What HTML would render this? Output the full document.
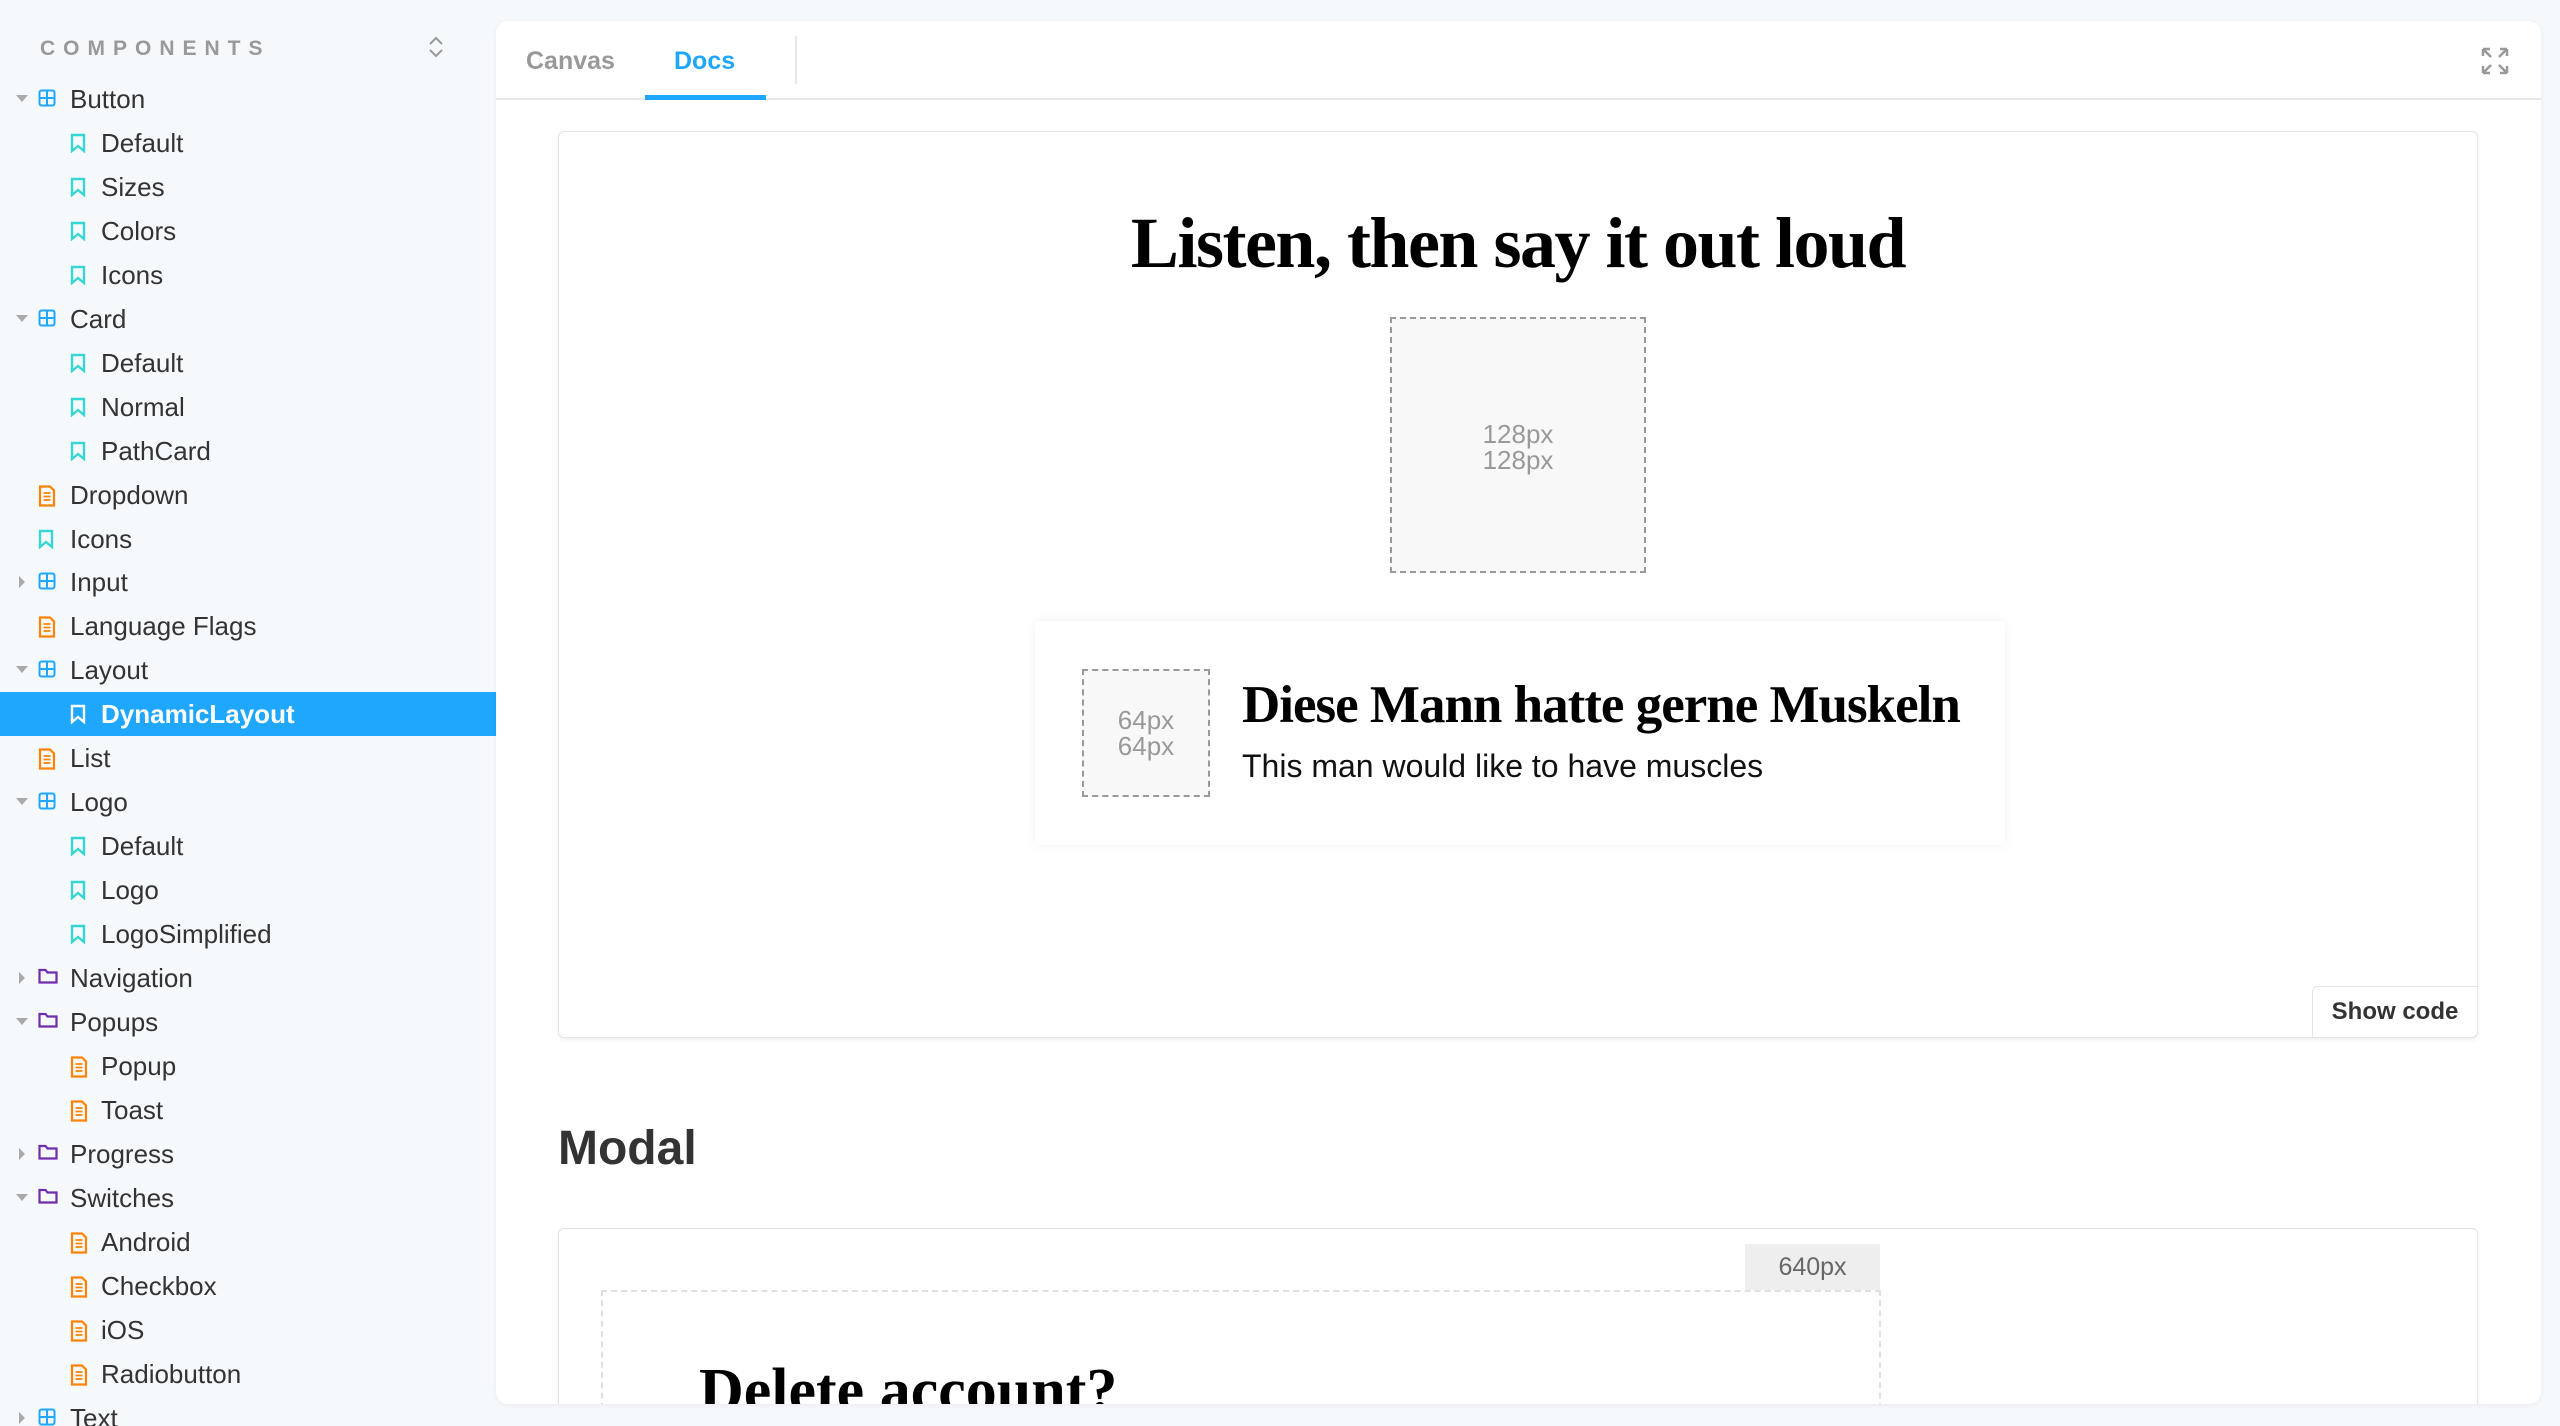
<!DOCTYPE html>
<html style="overflow:hidden;height:1426px"><head><meta charset="utf-8"><style>
*{margin:0;padding:0;box-sizing:border-box}
body{width:2560px;height:1426px;background:#f6f9fc;font-family:"Liberation Sans",sans-serif;position:relative;overflow:hidden;color:#333}
.sb{position:absolute;left:0;top:0;width:496px;height:1426px;overflow:hidden}
.hd{position:absolute;left:40px;top:37px;font-size:21px;font-weight:bold;letter-spacing:8px;color:#999}
.row{position:absolute;left:0;width:496px;height:44px;font-size:26px;line-height:44px;color:#333;overflow:hidden}
.row .t{position:absolute;top:0}
.row svg{position:absolute}
.act{background:#1ea7fd;color:#fff;font-weight:bold}
.main{position:absolute;left:496px;top:21px;width:2045px;height:1383px;background:#fff;border-radius:12px;box-shadow:0 1px 6px rgba(0,0,0,.06);overflow:hidden}
.tabs{position:absolute;left:0;top:0;width:100%;height:79px;border-bottom:2px solid #e8e8e8}
.tab{position:absolute;top:26px;font-size:25px;font-weight:bold}
.card{position:absolute;background:#fff;border:1px solid #e4e4e4;border-radius:6px;box-shadow:0 2px 5px rgba(0,0,0,.06)}
.ph{position:absolute;background:#f8f8f8;border:2px dashed #999;color:#999;text-align:center;font-family:"Liberation Sans",sans-serif}
.serif{font-family:"Liberation Serif",serif;font-weight:bold;color:#000}
</style></head><body>
<div class="sb">
<div class="hd">COMPONENTS</div>
<svg style="position:absolute;left:428px;top:35px" width="16" height="24" viewBox="0 0 16 24"><path d="M2 9 L8 3 L14 9 M2 15 L8 21 L14 15" fill="none" stroke="#999" stroke-width="2"/></svg>
<div id="rows"></div>
</div>
<div class="main">
 <div class="tabs">
  <div class="tab" style="left:30px;color:#999">Canvas</div>
  <div class="tab" style="left:178px;color:#1ea7fd">Docs</div>
  <div style="position:absolute;left:149px;top:74px;width:121px;height:5px;background:#1ea7fd"></div>
  <div style="position:absolute;left:299px;top:15px;width:2px;height:48px;background:#e8e8e8"></div>
  <svg style="position:absolute;left:1984px;top:25px" width="30" height="30" viewBox="0 0 30 30" fill="none" stroke="#999" stroke-width="2.5"><path d="M3 3 L11 11 M3 3 h7 M3 3 v7 M27 3 L19 11 M27 3 h-7 M27 3 v7 M3 27 L11 19 M3 27 h7 M3 27 v-7 M27 27 L19 19 M27 27 h-7 M27 27 v-7"/></svg>
 </div>
 <div class="card" style="left:62px;top:110px;width:1920px;height:907px">
  <div class="serif" style="position:absolute;left:0;width:100%;top:70px;text-align:center;font-size:72px;letter-spacing:-1.5px">Listen, then say it out loud</div>
  <div class="ph" style="left:831px;top:185px;width:256px;height:256px;font-size:26px;line-height:26px;padding-top:102px">128px<br>128px</div>
  <div class="card" style="left:476px;top:489px;width:970px;height:224px;border:none;box-shadow:0 0 12px rgba(0,0,0,.06)">
   <div class="ph" style="left:47px;top:48px;width:128px;height:128px;font-size:26px;line-height:26px;padding-top:36px">64px<br>64px</div>
   <div class="serif" style="position:absolute;left:207px;top:54px;font-size:53px;letter-spacing:-1px;white-space:nowrap">Diese Mann hatte gerne Muskeln</div>
   <div style="position:absolute;left:207px;top:127px;font-size:32px;color:#111;white-space:nowrap">This man would like to have muscles</div>
  </div>
  <div style="position:absolute;right:-1px;bottom:-1px;width:166px;height:52px;border:1px solid #e4e4e4;border-radius:6px 0 6px 0;background:#fff;font-size:24px;font-weight:bold;line-height:50px;text-align:center;color:#333">Show code</div>
 </div>
 <div style="position:absolute;left:62px;top:1100px;font-size:48px;font-weight:bold;color:#333">Modal</div>
 <div class="card" style="left:62px;top:1207px;width:1920px;height:176px;overflow:hidden;border-bottom:none;border-radius:6px 6px 0 0">
  <div style="position:absolute;left:1186px;top:15px;width:135px;height:46px;background:#eee;color:#666;font-size:25px;line-height:46px;text-align:center">640px</div>
  <div style="position:absolute;left:42px;top:61px;width:1280px;height:160px;border:2px dashed #e0e0e0;border-bottom:none">
   <div class="serif" style="position:absolute;left:96px;top:68px;font-size:62px;line-height:1">Delete account?</div>
  </div>
 </div>
</div>
<script>
const G='<svg width="18" height="18" viewBox="0 0 18 18" fill="none" stroke="#1ea7fd" stroke-width="2"><rect x="1.5" y="1.5" width="15" height="15" rx="2"/><path d="M9 1.5v15M1.5 9h15"/></svg>';
const B=c=>'<svg width="16" height="20" viewBox="0 0 16 20" fill="none" stroke="'+c+'" stroke-width="2.4"><path d="M2 2h12v16l-6-5-6 5z"/></svg>';
const D='<svg width="18" height="22" viewBox="0 0 18 22" fill="none" stroke="#ff8300" stroke-width="2.2"><path d="M2 1.5h10l4 4v15H2z"/><path d="M5.5 8h7M5.5 11.5h7M5.5 15h7" stroke-width="1.8"/></svg>';
const F='<svg width="20" height="16" viewBox="0 0 20 16" fill="none" stroke="#6f2cac" stroke-width="2.2"><path d="M1.5 2h6l2 2.5h9v10h-17z"/></svg>';
const items=[['Button',0,'g','d'],['Default',1,'b'],['Sizes',1,'b'],['Colors',1,'b'],['Icons',1,'b'],['Card',0,'g','d'],['Default',1,'b'],['Normal',1,'b'],['PathCard',1,'b'],['Dropdown',0,'doc'],['Icons',0,'b'],['Input',0,'g','r'],['Language Flags',0,'doc'],['Layout',0,'g','d'],['DynamicLayout',1,'b','',1],['List',0,'doc'],['Logo',0,'g','d'],['Default',1,'b'],['Logo',1,'b'],['LogoSimplified',1,'b'],['Navigation',0,'f','r'],['Popups',0,'f','d'],['Popup',1,'doc'],['Toast',1,'doc'],['Progress',0,'f','r'],['Switches',0,'f','d'],['Android',1,'doc'],['Checkbox',1,'doc'],['iOS',1,'doc'],['Radiobutton',1,'doc'],['Text',0,'g','r']];
let h='';
items.forEach((it,i)=>{
 const [t,l,ic,ar,act]=it;const top=77+i*43.95;
 const ix=l?70:38;const tx=l?101:70;
 const hh=Math.min(44,1426-top);
 let icon=ic=='g'?G:ic=='b'?B(act?'#fff':'#37d5d3'):ic=='doc'?D:F;
 let arrow='';
 if(ar=='d')arrow='<svg style="left:16px;top:18px" width="12" height="8" viewBox="0 0 12 8"><path d="M0 0h12L6 7z" fill="#aaa"/></svg>';
 if(ar=='r')arrow='<svg style="left:19px;top:16px" width="7" height="12" viewBox="0 0 7 12"><path d="M0 0v12L6 6z" fill="#aaa"/></svg>';
 h+='<div class="row'+(act?' act':'')+'" style="top:'+top+'px;height:'+hh+'px">'+arrow+'<span style="position:absolute;left:'+ix+'px;top:12px;line-height:0">'+icon+'</span><span class="t" style="left:'+tx+'px">'+t+'</span></div>';
});
document.getElementById('rows').innerHTML=h;
</script>
</body></html>
